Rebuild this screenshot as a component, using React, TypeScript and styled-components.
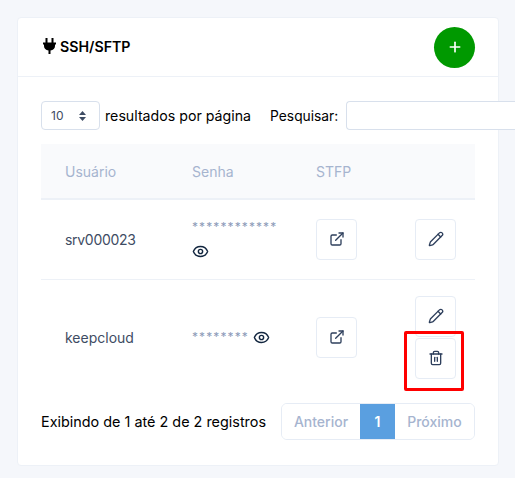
import { createGlobalStyle, styled } from 'styled-components';
import { ExternalLink, Eye, Pencil, Plus, Trash2 } from 'lucide-react';

const GlobalStyle = createGlobalStyle`
  html, body {
    margin: 0;
    height: 478px;
    overflow: hidden;
    background: #f5f7fb;
    color: #12263f;
    font-family: Inter, "Noto Sans", sans-serif;
    font-size: 14px;
  }
`;

const Page = styled.div`
  padding: 17px 16px 12px 17px;
`;

const Card = styled.section`
  background: #fff;
  border: 1px solid #edf1f7;
  border-radius: 4px;
  height: 449px;
  box-sizing: border-box;
`;

const CardHeader = styled.header`
  display: flex;
  align-items: center;
  justify-content: space-between;
  height: 59px;
  box-sizing: border-box;
  padding: 0 23px 0 25px;
  border-bottom: 1px solid #edf1f7;
`;

const CardTitle = styled.h5`
  display: flex;
  align-items: center;
  gap: 4px;
  margin: 0 0 2px;
  color: #000;
  font-size: 14.2px;
  font-weight: 600;
`;

const AddButton = styled.button`
  display: flex;
  align-items: center;
  justify-content: center;
  width: 41px;
  height: 41px;
  padding: 0;
  border: none;
  border-radius: 50%;
  background: #009900;
  color: #fff;
`;

const CardBody = styled.div`
  padding: 24px 23px 0 23px;
`;

const Toolbar = styled.div`
  display: flex;
  align-items: center;
  height: 29px;
  color: #000;
  font-size: 14.2px;
  white-space: nowrap;
`;

const PageSize = styled.div`
  display: flex;
  flex: none;
  align-items: center;
  justify-content: space-between;
  width: 59px;
  height: 29px;
  box-sizing: border-box;
  padding: 0 12px 0 9px;
  margin-right: 5px;
  border: 1px solid #d8e0ec;
  border-radius: 4px;
  color: #3e4c63;
  font-size: 12px;
`;

const SearchLabel = styled.label`
  margin-left: 19px;
  margin-right: 8px;
  font-size: 13.8px;
`;

// runs off the right edge of the window in the reference, so no right border shows
const SearchInput = styled.input`
  flex: none;
  width: 169px;
  height: 29px;
  box-sizing: border-box;
  border: 1px solid #d8e0ec;
  border-right: none;
  border-radius: 4px 0 0 4px;
  background: #fff;
`;

const Table = styled.table`
  width: 434px;
  margin-top: 14px;
  border-collapse: collapse;
  table-layout: fixed;
`;

const HeadCell = styled.th`
  height: 54px;
  padding: 0 0 0 24px;
  background: #f9fafc;
  border-bottom: 2px solid #edf1f7;
  color: #a6b4cf;
  font-weight: 400;
  text-align: left;
`;

const Row = styled.tr<{ $height: number }>`
  height: ${(props) => props.$height}px;
  border-bottom: 1px solid #edf1f7;

  &:last-child {
    border-bottom: none;
  }
`;

const Cell = styled.td<{ $tight?: boolean; $stacked?: boolean }>`
  padding: 0 0 ${(props) => (props.$stacked ? '6px' : '0')} 24px;
  color: #3e4c63;
  letter-spacing: ${(props) => (props.$tight ? '-0.3px' : 'normal')};
  vertical-align: middle;
`;

const Mask = styled.span`
  color: #8c9ab8;
  font-size: 12px;
  letter-spacing: 1.1px;
  line-height: 28px;
`;

const EyeIcon = styled(Eye)`
  color: #12263f;
  vertical-align: middle;
`;

const ActionStack = styled.div`
  display: flex;
  flex-direction: column;
  align-items: flex-start;
  gap: 1px;
`;

const IconButton = styled.button`
  display: flex;
  align-items: center;
  justify-content: center;
  width: 41px;
  height: 41px;
  padding: 0;
  background: #fff;
  border: 1px solid #e6ecf5;
  border-radius: 4px;
  color: #2e3f5c;
`;

const Highlight = styled.div`
  position: relative;
`;

const RedBox = styled.div`
  position: absolute;
  left: -11px;
  top: -7px;
  width: 60px;
  height: 60px;
  box-sizing: border-box;
  border: 3px solid #f00;
  border-radius: 2px;
`;

const Footer = styled.div`
  display: flex;
  align-items: center;
  justify-content: space-between;
  margin-top: 8px;
  color: #000;
  font-size: 14.4px;
`;

const Pager = styled.div`
  display: flex;
  height: 37px;
  box-sizing: border-box;
  border: 1px solid #e6ecf5;
  border-radius: 6px;
  font-size: 14px;
  overflow: hidden;
`;

const PagerItem = styled.span<{ $active?: boolean; $width: number }>`
  display: flex;
  align-items: center;
  justify-content: center;
  width: ${(props) => props.$width}px;
  background: ${(props) => (props.$active ? '#5a9fe0' : '#fff')};
  color: ${(props) => (props.$active ? '#fff' : '#a6b4cf')};
  font-weight: ${(props) => (props.$active ? 600 : 500)};
`;

const PlugIcon = () => (
  <svg width="13" height="16" viewBox="0 0 13 16" fill="#000">
    <rect x="2.5" y="0" width="2" height="5" />
    <rect x="8.5" y="0" width="2" height="5" />
    <path d="M0 4.500h13v2h-1v1.500c0 2.400-1.800 4.200-4.500 4.500V16h-2v-3.500C2.800 12.200 1 10.400 1 8V6.500H0z" />
  </svg>
);

export default function App() {
  return (
    <>
      <GlobalStyle />
      <Page>
        <Card>
          <CardHeader>
            <CardTitle>
              <PlugIcon />
              SSH/SFTP
            </CardTitle>
            <AddButton type="button">
              <Plus size={16} strokeWidth={2.5} />
            </AddButton>
          </CardHeader>
          <CardBody>
            <Toolbar>
              <PageSize>
                10
                <svg width="9" height="12" viewBox="0 0 9 12" fill="#3e4c63">
                  <path d="M4.500 1 8 5H1zM4.500 11 1 7h7z" />
                </svg>
              </PageSize>
              resultados por página
              <SearchLabel>Pesquisar:</SearchLabel>
              <SearchInput />
            </Toolbar>
            <Table>
              <colgroup>
                <col width="127" />
                <col width="124" />
                <col width="99" />
                <col width="84" />
              </colgroup>
              <thead>
                <tr>
                  <HeadCell>Usuário</HeadCell>
                  <HeadCell>Senha</HeadCell>
                  <HeadCell>STFP</HeadCell>
                  <HeadCell />
                </tr>
              </thead>
              <tbody>
                <Row $height={80}>
                  <Cell $tight>srv000023</Cell>
                  <Cell $stacked>
                    <Mask>************</Mask>
                    <br />
                    <EyeIcon size={17} />
                  </Cell>
                  <Cell>
                    <IconButton type="button">
                      <ExternalLink size={16} />
                    </IconButton>
                  </Cell>
                  <Cell>
                    <IconButton type="button">
                      <Pencil size={16} />
                    </IconButton>
                  </Cell>
                </Row>
                <Row $height={116}>
                  <Cell>keepcloud</Cell>
                  <Cell>
                    <Mask>********</Mask> <EyeIcon size={17} />
                  </Cell>
                  <Cell>
                    <IconButton type="button">
                      <ExternalLink size={16} />
                    </IconButton>
                  </Cell>
                  <Cell>
                    <ActionStack>
                      <IconButton type="button">
                        <Pencil size={16} />
                      </IconButton>
                      <Highlight>
                        <IconButton type="button">
                          <Trash2 size={16} />
                        </IconButton>
                        <RedBox />
                      </Highlight>
                    </ActionStack>
                  </Cell>
                </Row>
              </tbody>
            </Table>
            <Footer>
              Exibindo de 1 até 2 de 2 registros
              <Pager>
                <PagerItem $width={78}>Anterior</PagerItem>
                <PagerItem $active $width={35}>
                  1
                </PagerItem>
                <PagerItem $width={79}>Próximo</PagerItem>
              </Pager>
            </Footer>
          </CardBody>
        </Card>
      </Page>
    </>
  );
}
